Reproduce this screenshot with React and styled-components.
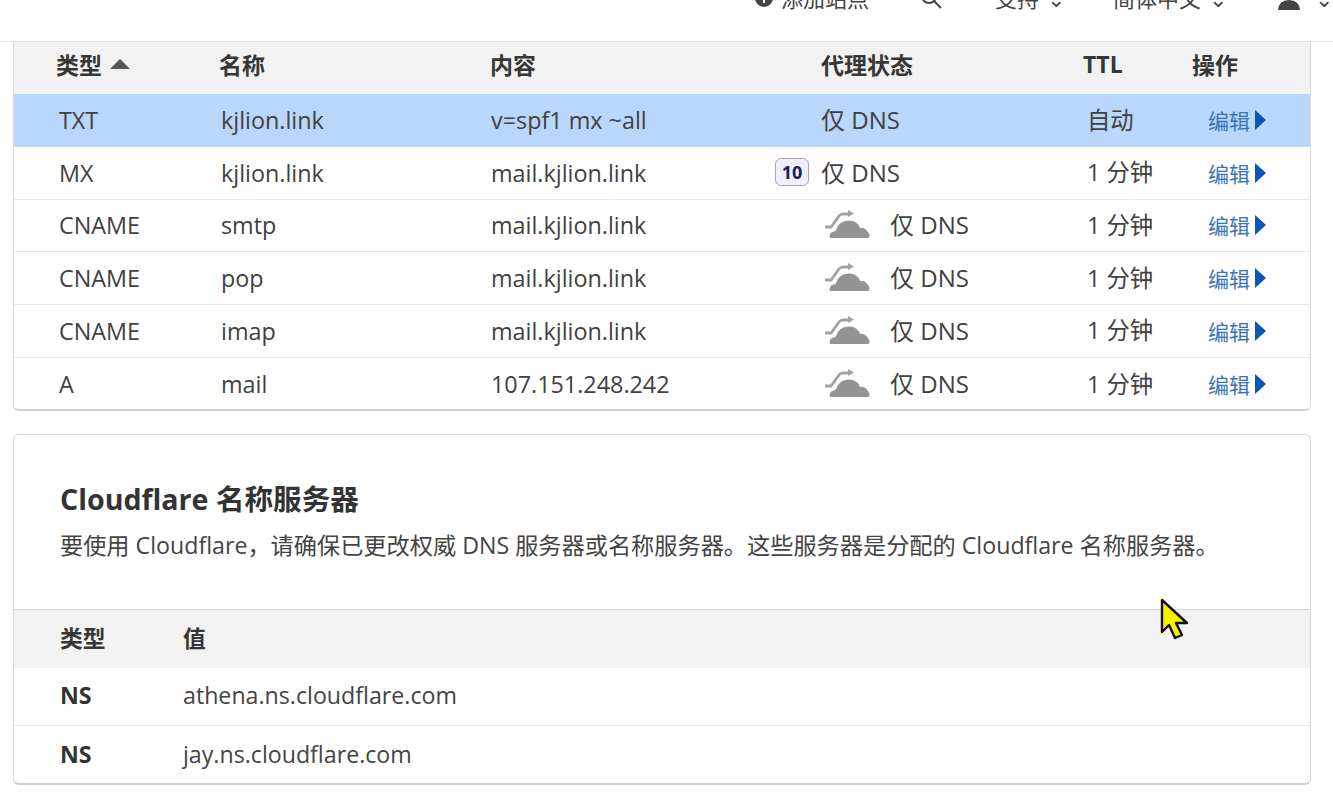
import React from "react";
import styled, { createGlobalStyle } from "styled-components";

const Global = createGlobalStyle`
  html, body { margin: 0; padding: 0; background: #fff; }
  body {
    width: 1333px; height: 797px; overflow: hidden; position: relative;
    font-family: "Open Sans", "Noto Sans CJK SC", sans-serif;
    color: #3a3a3a;
  }
`;

const TopBar = styled.header`
  height: 41px;
  border-bottom: 1px solid #e6e6e6;
  overflow: hidden;
  display: flex;
  align-items: flex-start;
  justify-content: flex-end;
`;
const NavItems = styled.div`
  display: flex;
  align-items: center;
  height: 20px;
  margin-top: -12px;
  font-size: 22px;
  line-height: 20px;
  color: #444;
`;
const NavItem = styled.span`
  display: inline-flex;
  align-items: center;
  gap: ${p => p.$gap || 8}px;
  margin-left: ${p => p.$left || 0}px;
  white-space: nowrap;
`;

const Card = styled.section`
  width: 1298px;
  margin-left: 13px;
  background: #fff;
  border: 1px solid #d9d9d9;
  border-bottom: 2px solid #cfcfcf;
  box-sizing: border-box;
  overflow: hidden;
`;
const DnsCard = styled(Card)`
  border-top: none;
  border-radius: 0 0 6px 6px;
  height: 369px;
`;
const NsCard = styled(Card)`
  margin-top: 23px;
  height: 351px;
  border-radius: 6px;
`;

const HeadRow = styled.div`
  display: grid;
  grid-template-columns: 163px 271px 331px 262px 109px 1fr;
  padding: 0 0 9px 42px;
  box-sizing: border-box;
  height: 52px;
  align-items: center;
  background: #f2f2f2;
  font-size: 23px;
  font-weight: 700;
  color: #363636;
`;
const SortLabel = styled.span`
  display: inline-flex;
  align-items: center;
  gap: 8px;
`;
const SortArrow = styled.i`
  width: 0; height: 0;
  border-left: 10px solid transparent;
  border-right: 10px solid transparent;
  border-bottom: 10px solid #555;
`;
const Row = styled.div`
  display: grid;
  grid-template-columns: 162px 270px 330px 266px 120px 1fr;
  padding-left: 45px;
  height: 52.75px;
  box-sizing: border-box;
  align-items: center;
  font-size: 23.35px;
  color: #414141;
  background: ${p => (p.$selected ? "#b9d6fb" : "#fff")};
  border-bottom: ${p => (p.$selected || p.$last ? "none" : "1px solid #e8e8e8")};
  white-space: nowrap;
`;
const ProxyCell = styled.span`
  position: relative;
  display: flex;
  align-items: center;
  gap: 20px;
  height: 32px;
  margin-top: -3px;
  font-size: 24px;
`;
const CloudMark = styled.svg`
  margin-left: 2px;
  margin-top: 1px;
`;
const TtlCell = styled.span`
  margin-top: -3px;
`;
const Badge = styled.span`
  position: absolute;
  left: -46px;
  top: calc(50% + 1px);
  transform: translateY(-50%);
  width: 34px;
  height: 28px;
  box-sizing: border-box;
  display: flex;
  align-items: center;
  justify-content: center;
  border: 1px solid #a99fc9;
  border-radius: 6px;
  background: #f1effb;
  color: #1f1b5c;
  font-size: 18px;
  font-weight: 700;
`;
const EditLink = styled.span`
  display: inline-flex;
  align-items: center;
  gap: 5px;
  font-size: 21px;
  color: #3b74b4;
  margin: 0 0 0 1px;
`;
const EditArrow = styled.i`
  width: 0; height: 0;
  border-top: 10px solid transparent;
  border-bottom: 10px solid transparent;
  border-left: 11px solid #0b56b8;
`;

const Intro = styled.div`
  height: 174px;
  padding: 45px 0 0 46px;
  box-sizing: border-box;
`;
const Title = styled.h2`
  margin: 0;
  font-size: 28.6px;
  line-height: 38px;
  font-weight: 700;
  color: #333;
`;
const Desc = styled.p`
  margin: 11px 0 0;
  font-size: 23.2px;
  line-height: 32px;
  color: #444;
  white-space: nowrap;
`;
const NsHead = styled.div`
  display: grid;
  grid-template-columns: 123px 1fr;
  padding: 0 0 3px 46px;
  height: 58.5px;
  align-items: center;
  box-sizing: border-box;
  background: #f2f2f2;
  border-top: 1px solid #d4d4d4;
  font-size: 22.8px;
  font-weight: 700;
  color: #363636;
`;
const NsRow = styled.div`
  display: grid;
  grid-template-columns: 123px 1fr;
  padding: 0 0 2px 46px;
  height: 58.5px;
  align-items: center;
  box-sizing: border-box;
  font-size: 23.2px;
  color: #444;
  border-bottom: ${p => (p.$last ? "none" : "1px solid #e8e8e8")};
`;
const NsType = styled.b`
  font-weight: 700;
  color: #333;
`;
const Pointer = styled.svg`
  position: absolute;
  left: 1158px;
  top: 596px;
  width: 34px;
  height: 48px;
`;

const Cloud = () => (
  <CloudMark width="47" height="30" viewBox="0 0 47 30">
    <path d="M2 18 H8 L16 7 Q17.5 5 20 5 H27" fill="none" stroke="#a2a2a2" strokeWidth="2.8" />
    <path d="M25 1 L31 4.5 L25 8 Z" fill="#a2a2a2" />
    <path d="M7 29 Q5 23.5 12.5 22 Q15.5 11.5 26 11.5 Q34.5 11.5 37 19 Q41.5 18 44.5 22.5 Q48 26 45.5 29 Z" fill="#949494" />
  </CloudMark>
);

const rows = [
  ["TXT", "kjlion.link", "v=spf1 mx ~all", "plain", "自动"],
  ["MX", "kjlion.link", "mail.kjlion.link", "badge", "1 分钟"],
  ["CNAME", "smtp", "mail.kjlion.link", "cloud", "1 分钟"],
  ["CNAME", "pop", "mail.kjlion.link", "cloud", "1 分钟"],
  ["CNAME", "imap", "mail.kjlion.link", "cloud", "1 分钟"],
  ["A", "mail", "107.151.248.242", "cloud", "1 分钟"],
];

export default function App() {
  return (
    <>
      <Global />
      <TopBar>
        <NavItems>
          <NavItem>
            <svg width="18" height="18" viewBox="0 0 18 18"><circle cx="9" cy="9" r="9" fill="#444" /><rect x="8" y="4" width="2" height="10" fill="#fff" /><rect x="4" y="8" width="10" height="2" fill="#fff" /></svg>
            添加站点
          </NavItem>
          <NavItem $left={50}>
            <svg width="24" height="24" viewBox="0 0 24 24" fill="none" stroke="#444" strokeWidth="2"><circle cx="10" cy="10" r="7" /><path d="M15 15 L22 22" /></svg>
          </NavItem>
          <NavItem $left={52}>支持 <span>⌄</span></NavItem>
          <NavItem $left={48}>简体中文 <span>⌄</span></NavItem>
          <NavItem $left={50} $gap={14}>
            <svg width="24" height="24" viewBox="0 0 24 24" fill="#444"><circle cx="12" cy="7" r="6" /><path d="M1 24 Q2 14 12 14 Q22 14 23 24 Z" /></svg>
            <span>⌄</span>
          </NavItem>
        </NavItems>
      </TopBar>

      <DnsCard>
        <HeadRow>
          <SortLabel>类型 <SortArrow /></SortLabel>
          <span>名称</span>
          <span>内容</span>
          <span>代理状态</span>
          <span>TTL</span>
          <span>操作</span>
        </HeadRow>
        {rows.map((r, i) => (
          <Row key={i} $selected={i === 0} $last={i === rows.length - 1}>
            <span>{r[0]}</span>
            <span>{r[1]}</span>
            <span>{r[2]}</span>
            <ProxyCell>
              {r[3] === "badge" && <Badge>10</Badge>}
              {r[3] === "cloud" && <Cloud />}
              <span>仅 DNS</span>
            </ProxyCell>
            <TtlCell>{r[4]}</TtlCell>
            <EditLink>编辑<EditArrow /></EditLink>
          </Row>
        ))}
      </DnsCard>

      <NsCard>
        <Intro>
          <Title>Cloudflare 名称服务器</Title>
          <Desc>要使用 Cloudflare，请确保已更改权威 DNS 服务器或名称服务器。这些服务器是分配的 Cloudflare 名称服务器。</Desc>
        </Intro>
        <NsHead><span>类型</span><span>值</span></NsHead>
        <NsRow><NsType>NS</NsType><span>athena.ns.cloudflare.com</span></NsRow>
        <NsRow $last><NsType>NS</NsType><span>jay.ns.cloudflare.com</span></NsRow>
      </NsCard>

      <Pointer viewBox="0 0 34 48">
        <path d="M4 4 L4 36 L11 29 L17 42 L24 39 L18 27 L29 27 Z" fill="#f7f000" stroke="#111" strokeWidth="2.4" strokeLinejoin="round" />
      </Pointer>
    </>
  );
}
